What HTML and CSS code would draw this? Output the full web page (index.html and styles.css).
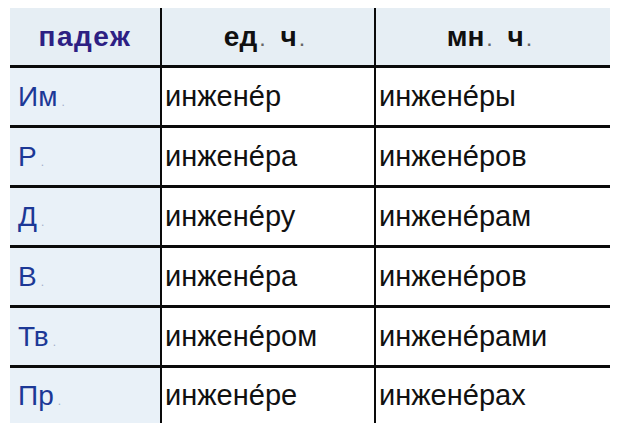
FILE: index.html
```html
<!DOCTYPE html>
<html lang="ru">
<head>
<meta charset="utf-8">
<link rel="stylesheet" href="styles.css">
</head>
<body>
<div class="table">
  <div class="row head">
    <div class="cell case-h"><span>падеж</span></div>
    <div class="cell num"><span>ед<span class="dot">.</span> ч<span class="dot">.</span></span></div>
    <div class="cell num"><span>мн<span class="dot">.</span> ч<span class="dot">.</span></span></div>
  </div>
  <div class="row">
    <div class="cell case"><span>Им<span class="dot">.</span></span></div>
    <div class="cell word"><span>инжене́р</span></div>
    <div class="cell word"><span>инжене́ры</span></div>
  </div>
  <div class="row">
    <div class="cell case"><span>Р<span class="dot">.</span></span></div>
    <div class="cell word"><span>инжене́ра</span></div>
    <div class="cell word"><span>инжене́ров</span></div>
  </div>
  <div class="row">
    <div class="cell case"><span>Д<span class="dot">.</span></span></div>
    <div class="cell word"><span>инжене́ру</span></div>
    <div class="cell word"><span>инжене́рам</span></div>
  </div>
  <div class="row">
    <div class="cell case"><span>В<span class="dot">.</span></span></div>
    <div class="cell word"><span>инжене́ра</span></div>
    <div class="cell word"><span>инжене́ров</span></div>
  </div>
  <div class="row">
    <div class="cell case"><span>Тв<span class="dot">.</span></span></div>
    <div class="cell word"><span>инжене́ром</span></div>
    <div class="cell word"><span>инжене́рами</span></div>
  </div>
  <div class="row last">
    <div class="cell case"><span>Пр<span class="dot">.</span></span></div>
    <div class="cell word"><span>инжене́ре</span></div>
    <div class="cell word"><span>инжене́рах</span></div>
  </div>
</div>
</body>
</html>
```
FILE: styles.css
```css
html, body {
  margin: 0;
  padding: 0;
  background: #ffffff;
}
body {
  font-family: "Liberation Sans", Arial, sans-serif;
}
.table {
  margin: 8px 0 0 10px;
  width: 600px;
}
.row {
  display: grid;
  grid-template-columns: 150px 214px 236px;
  height: 57px;
  border-bottom: 3px solid #0a0a0a;
}
.row.last {
  height: 55px;
  border-bottom: none;
}
.row.head {
  background: #e6eef4;
}
.cell {
  display: flex;
  align-items: center;
  color: #111111;
}
.cell + .cell {
  border-left: 2px solid #0a0a0a;
}
.case-h {
  justify-content: center;
  font-weight: bold;
  color: #2d2083;
  letter-spacing: 1.5px;
  font-size: 28px;
}
.num {
  justify-content: center;
  font-weight: bold;
  font-size: 28px;
  color: #101010;
}
.num .dot {
  color: #666666;
  font-size: 16px;
  margin: 0 8px 0 3px;
}
.case {
  background: #e9f1f8;
  color: #1c3896;
  padding-left: 8px;
  font-size: 28px;
}
.case .dot {
  color: #a3aec8;
  font-size: 12px;
  margin-left: 4px;
}
.word {
  padding-left: 3px;
  font-size: 29px;
}
```
